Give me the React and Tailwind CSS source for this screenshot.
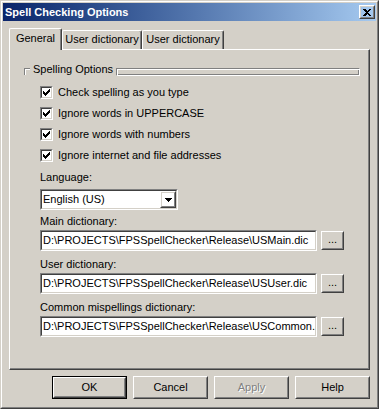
import React from "react";

const Raised = ({ className = "", children, def }) => (
  <div className={`${def ? "border border-black" : ""} ${className}`}>
    <div className="w-full h-full border border-t-white border-l-white border-r-[#404040] border-b-[#404040]">
      <div className="w-full h-full border border-t-[#d4d0c8] border-l-[#d4d0c8] border-r-[#808080] border-b-[#808080] flex items-center justify-center">
        {children}
      </div>
    </div>
  </div>
);

const Sunken = ({ className = "", children }) => (
  <div className={`border border-t-[#808080] border-l-[#808080] border-r-white border-b-white ${className}`}>
    <div className="w-full h-full border border-t-[#404040] border-l-[#404040] border-r-[#d4d0c8] border-b-[#d4d0c8] bg-white flex items-center overflow-hidden">
      {children}
    </div>
  </div>
);

const Check = () => (
  <svg width="7" height="7" viewBox="0 0 7 7" shapeRendering="crispEdges">
    <rect x="0" y="2" width="1" height="3" fill="#000" />
    <rect x="1" y="3" width="1" height="3" fill="#000" />
    <rect x="2" y="4" width="1" height="3" fill="#000" />
    <rect x="3" y="3" width="1" height="3" fill="#000" />
    <rect x="4" y="2" width="1" height="3" fill="#000" />
    <rect x="5" y="1" width="1" height="3" fill="#000" />
    <rect x="6" y="0" width="1" height="3" fill="#000" />
  </svg>
);

const CheckRow = ({ label }) => (
  <div className="flex items-center h-[13px] gap-[5px]">
    <Sunken className="w-[13px] h-[13px]">
      <div className="w-full h-full flex items-center justify-center">
        <Check />
      </div>
    </Sunken>
    <span>{label}</span>
  </div>
);

const PathField = ({ label, value }) => (
  <div className="flex flex-col">
    <div className="h-[13px]">{label}</div>
    <div className="flex items-center mt-[2px] gap-[4px]">
      <Sunken className="w-[277px] h-[21px]">
        <span className="pl-[1px] whitespace-nowrap">{value}</span>
      </Sunken>
      <Raised className="w-[23px] h-[19px]">
        <span className="leading-none -mt-[2px]">...</span>
      </Raised>
    </div>
  </div>
);

const Tab = ({ label, active, w }) =>
  active ? (
    <div className="relative z-10 -mb-px h-[22px] w-[53px] bg-[#d4d0c8] border-t border-l border-t-white border-l-white border-r border-r-[#404040] shadow-[inset_-1px_0_#808080] rounded-tl-[2px] rounded-tr-[2px] flex justify-center pt-[3px]">
      {label}
    </div>
  ) : (
    <div className={`h-[19px] ${w} whitespace-nowrap border-t border-l border-t-white border-l-white border-r border-r-[#404040] shadow-[inset_-1px_0_#808080] rounded-tl-[2px] rounded-tr-[2px] flex justify-center pt-[2px]`}>
      {label}
    </div>
  );

export default function App() {
  return (
    <div className="w-[379px] h-[409px] bg-[#d4d0c8] text-black text-[11px] leading-[13px] font-['Liberation_Sans',Arial,sans-serif] border border-t-[#d4d0c8] border-l-[#d4d0c8] border-r-[#404040] border-b-[#404040]">
      <div className="w-full h-full border border-t-white border-l-white border-r-[#808080] border-b-[#808080] p-px">
        {/* title bar */}
        <div className="h-[18px] bg-gradient-to-r from-[#0a246a] to-[#a6caf0] flex items-center justify-between pl-[2px] pr-[1px]">
          <span className="text-white font-bold">Spell Checking Options</span>
          <Raised className="w-[16px] h-[14px]">
            <svg width="8" height="7" viewBox="0 0 8 7" shapeRendering="crispEdges">
              <path d="M0 0h2l2 2 2-2h2L5 3.5 8 7H6L4 5 2 7H0l3-3.5z" fill="#000" />
            </svg>
          </Raised>
        </div>

        <div className="px-[6px] pt-[7px]">
          {/* tabs */}
          <div className="flex items-end h-[21px]">
            <Tab label="General" active />
            <Tab label="User dictionary" w="w-[80px]" />
            <Tab label="User dictionary" w="w-[82px]" />
          </div>

          {/* panel */}
          <div className="h-[321px] border border-t-white border-l-white border-r-[#404040] border-b-[#404040] shadow-[inset_-1px_-1px_#808080]">
            <div className="pl-[14px] pt-[13px]">
              <div className="flex items-start h-[13px]">
                <div className="mt-[5px] w-[6px] h-[7px] border-t border-l border-t-[#808080] border-l-[#808080] shadow-[inset_1px_1px_white]" />
                <span className="ml-[3px]">Spelling Options</span>
                <div className="ml-[3px] mt-[5px] w-[244px] h-[8px] border border-t-[#808080] border-l-[#808080] border-r-white border-b-white shadow-[inset_1px_1px_white,inset_-1px_-1px_#808080]" />
              </div>

              <div className="pl-[16px] flex flex-col">
                <div className="mt-[10px] flex flex-col gap-[8px]">
                  <CheckRow label="Check spelling as you type" />
                  <CheckRow label="Ignore words in UPPERCASE" />
                  <CheckRow label="Ignore words with numbers" />
                  <CheckRow label="Ignore internet and file addresses" />
                </div>

                <div className="mt-[9px] h-[13px]">Language:</div>
                <Sunken className="mt-[5px] w-[138px] h-[21px]">
                  <div className="flex-1 pl-[1px]">English (US)</div>
                  <Raised className="w-[16px] h-[17px]">
                    <svg width="7" height="4" viewBox="0 0 7 4" shapeRendering="crispEdges">
                      <path d="M0 0h7L3.5 4z" fill="#000" />
                    </svg>
                  </Raised>
                </Sunken>

                <div className="mt-[5px] flex flex-col gap-[7px]">
                  <PathField label="Main dictionary:" value="D:\PROJECTS\FPSSpellChecker\Release\USMain.dic" />
                  <PathField label="User dictionary:" value="D:\PROJECTS\FPSSpellChecker\Release\USUser.dic" />
                  <PathField label="Common mispellings dictionary:" value="D:\PROJECTS\FPSSpellChecker\Release\USCommon.dic" />
                </div>
              </div>
            </div>
          </div>

          {/* buttons */}
          <div className="mt-[6px] flex justify-end gap-[6px]">
            <Raised def className="w-[75px] h-[23px]">OK</Raised>
            <Raised className="w-[75px] h-[23px]">Cancel</Raised>
            <Raised className="w-[75px] h-[23px]">
              <span className="text-[#808080] [text-shadow:1px_1px_#fff]">Apply</span>
            </Raised>
            <Raised className="w-[75px] h-[23px]">Help</Raised>
          </div>
        </div>
      </div>
    </div>
  );
}
